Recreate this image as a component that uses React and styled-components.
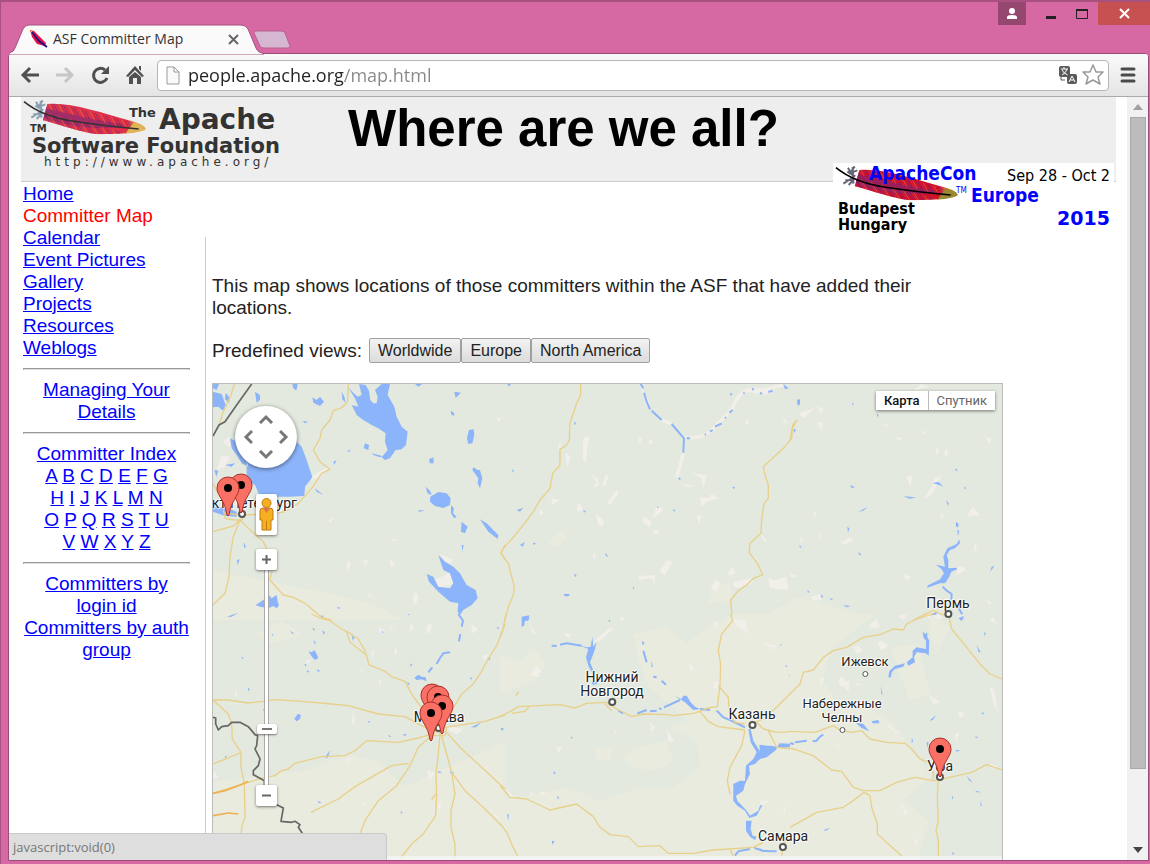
import styled, { createGlobalStyle, css } from "styled-components";
import { useState } from "react";

const GlobalStyle = createGlobalStyle`
    * {
        box-sizing: border-box;
    }

    body {
        margin: 0;
        background: #d668a3;
        font-family: "Liberation Sans", Arial, sans-serif;
        font-size: 19px;
        line-height: 22px;
        color: #222;
    }

    button {
        font: inherit;
        color: inherit;
        cursor: pointer;
    }
`;

const UI_FONT = `"Open Sans", "Noto Sans", sans-serif`;

/* ---------- browser window ---------- */

const Window = styled.div`
    display: flex;
    flex-direction: column;
    height: 100vh;
    overflow: hidden;
    background: #d668a3;
    border-top: 2px solid #a8507f;
    border-left: 1px solid #a8507f;
`;

const TitleBar = styled.header`
    display: flex;
    align-items: flex-start;
    justify-content: space-between;
    height: 51px;
    padding-left: 8px;
    flex-shrink: 0;
    font-family: ${UI_FONT};
`;

const TabStrip = styled.div`
    display: flex;
    padding-top: 22px;
`;

const Tab = styled.div`
    position: relative;
    display: flex;
    align-items: center;
    gap: 4px;
    width: 252px;
    height: 30px;
    padding: 0 22px 0 20px;
    font-size: 14px;
    color: #333;
`;

const TabShape = styled.svg`
    position: absolute;
    left: 0;
    top: 0;
`;

const TabTitle = styled.span`
    position: relative;
    flex: 1;
    white-space: nowrap;
`;

const PlainButton = styled.button`
    position: relative;
    display: flex;
    align-items: center;
    justify-content: center;
    padding: 0;
    border: none;
    background: none;
`;

const Favicon = styled.svg`
    position: relative;
`;

const NewTabButton = styled(PlainButton)`
    height: 30px;
    margin-left: -8px;
`;

const WindowButtons = styled.div`
    display: flex;
`;

const WindowButton = styled(PlainButton)`
    width: ${(p) => p.$width}px;
    height: 23px;
    background: ${(p) => p.$bg || "none"};
    margin-right: ${(p) => p.$gap || 0}px;
`;

const Frame = styled.div`
    display: flex;
    flex-direction: column;
    flex: 1;
    min-height: 0;
    margin: 0 1px 3px 7px;
    border: 1px solid #9b4d78;
    border-radius: 4px 4px 0 0;
    background: #fff;
    overflow: hidden;
`;

const Toolbar = styled.nav`
    display: flex;
    align-items: center;
    flex-shrink: 0;
    height: 43px;
    padding: 0 2px 0 3px;
    background: linear-gradient(#fafafa, #e4e4e4);
    border-bottom: 1px solid #aaa;
`;

const ToolButton = styled(PlainButton)`
    width: ${(p) => p.$width || 35}px;
    height: 32px;
`;

const AddressBar = styled.div`
    display: flex;
    align-items: center;
    flex: 1;
    height: 31px;
    margin-left: 5px;
    padding: 0 2px 0 8px;
    gap: 2px;
    background: #fff;
    border: 1px solid #b5b5b5;
    border-radius: 4px;
`;

const AddressInput = styled.input`
    flex: 1;
    min-width: 0;
    height: 27px;
    padding: 0 0 0 6px;
    border: none;
    outline: none;
    font-family: ${UI_FONT};
    font-size: 18px;
    color: #222;
    background: linear-gradient(to right, #222 162px, #888 162px);
    -webkit-background-clip: text;
    -webkit-text-fill-color: transparent;
`;

const Viewport = styled.div`
    position: relative;
    display: flex;
    flex: 1;
    min-height: 0;
`;

const ScrollTrack = styled.div`
    display: flex;
    flex-direction: column;
    align-items: center;
    width: 21px;
    flex-shrink: 0;
    background: #f1f1f1;
`;

const ScrollArrow = styled(PlainButton)`
    width: 21px;
    height: 20px;
`;

const ScrollThumb = styled.div`
    width: 16px;
    flex: 652;
    background: #bcbcbc;
    border: 1px solid #a9a9a9;
`;

const ScrollRest = styled.div`
    flex: 71;
`;

const StatusBubble = styled.div`
    position: absolute;
    left: 0;
    bottom: 0;
    width: 378px;
    height: 27px;
    padding: 2px 4px;
    background: #dedede;
    border: 1px solid #cacaca;
    border-width: 1px 1px 0 0;
    border-radius: 0 4px 0 0;
    font-family: ${UI_FONT};
    font-size: 13px;
    color: #777;
`;

/* ---------- page ---------- */

const Page = styled.div`
    flex: 1;
    min-width: 0;
    overflow: hidden;
    padding: 0 11px 0 12px;
`;

const PageHeader = styled.div`
    position: relative;
    display: flex;
    align-items: flex-start;
    gap: 57px;
    height: 85px;
    background: #eee;
    border-bottom: 1px solid #ccc;
`;

const PageTitle = styled.h1`
    margin: 3px 0 0;
    font-size: 51px;
    line-height: 58px;
    color: #000;
    white-space: nowrap;
`;

const Banner = styled.a`
    position: absolute;
    right: 2px;
    top: 66px;
    display: block;
    height: 75px;
    background: #fff;
`;

const Columns = styled.div`
    display: grid;
    grid-template-columns: 184px 1fr;
`;

const Sidebar = styled.aside`
    padding: 1px 15px 0 2px;
`;

const Menu = styled.ul`
    margin: 0;
    padding: 0;
    list-style: none;
`;

const link = css`
    color: #0000ff;
    text-decoration: underline;
`;

const Link = styled.a`
    ${link}
`;

const Current = styled.span`
    color: #ff0000;
`;

const Divider = styled.hr`
    margin: 9px 0;
    border: 1px solid #999;
    border-bottom-color: #ddd;
`;

const SideBlock = styled.div`
    text-align: center;
`;

const Main = styled.main`
    margin-top: 55px;
    padding: 38px 0 0 6px;
    border-left: 1px solid #ccc;
    min-height: 700px;
`;

const Intro = styled.p`
    max-width: 740px;
    margin: 0 0 19px;
`;

const Views = styled.div`
    display: flex;
    align-items: center;
    margin-bottom: 20px;
`;

const ViewsLabel = styled.span`
    margin-right: 7px;
`;

const ViewButton = styled.button`
    height: 25px;
    padding: 0 8px;
    border: 1px solid #a0a0a0;
    border-radius: 2px;
    background: linear-gradient(#f2f2f2, #dcdcdc);
    font-size: 16px;
    line-height: 22px;
`;

/* ---------- map ---------- */

const MapBox = styled.div`
    position: relative;
    max-width: 791px;
    height: 488px;
    border: 1px solid #bbb;
    overflow: hidden;
    background: #e3e9de;
    font-family: Roboto, "Noto Sans", sans-serif;
`;

const MapCanvas = styled.svg`
    display: block;
`;

const Place = styled.div`
    position: absolute;
    left: ${(p) => p.$x}px;
    top: ${(p) => p.$y}px;
    display: flex;
    flex-direction: column;
    align-items: center;
    gap: ${(p) => (p.$small ? 2 : 0)}px;
    transform: translate(-50%, -100%);
    font-size: ${(p) => (p.$small ? 13 : 14)}px;
    line-height: 14px;
    text-align: center;
    white-space: pre;
    color: #222;
    text-shadow: 0 0 2px #fff, 0 0 2px #fff, 1px 1px 1px #fff, -1px -1px 1px #fff;
`;

const PlaceDot = styled.span`
    width: ${(p) => (p.$small ? 6 : 8)}px;
    height: ${(p) => (p.$small ? 6 : 8)}px;
    border: ${(p) => (p.$small ? 1 : 2)}px solid #555;
    border-radius: 50%;
    background: #fff;
`;

const Pin = styled.svg`
    position: absolute;
    left: ${(p) => p.$x}px;
    top: ${(p) => p.$y}px;
    transform: translate(-50%, -100%);
`;

const Controls = styled.div`
    position: absolute;
    left: 22px;
    top: 22px;
    display: flex;
    flex-direction: column;
    align-items: center;
`;

const PanPad = styled.div`
    display: grid;
    grid-template-columns: repeat(3, 18px);
    grid-template-rows: repeat(3, 18px);
    grid-template-areas: ". up ." "left . right" ". down .";
    place-content: center;
    width: 62px;
    height: 62px;
    margin-bottom: 26px;
    border-radius: 50%;
    background: #fff;
    box-shadow: 0 1px 4px rgba(0, 0, 0, 0.5);
`;

const PanButton = styled(PlainButton)`
    grid-area: ${(p) => p.$area};

    svg {
        transform: rotate(${(p) => p.$turn}deg);
    }
`;

const ControlButton = styled(PlainButton)`
    width: 21px;
    height: ${(p) => p.$height || 21}px;
    margin-bottom: ${(p) => p.$gap || 0}px;
    background: #fff;
    border-radius: 2px;
    box-shadow: 0 1px 3px rgba(0, 0, 0, 0.5);
`;

const ZoomSlider = styled.input`
    appearance: none;
    writing-mode: vertical-lr;
    direction: rtl;
    width: 21px;
    height: 215px;
    margin: 0;
    background: none;

    &::-webkit-slider-runnable-track {
        appearance: none;
        width: 5px;
        height: 215px;
        margin: 0 auto;
        background: #fff;
        border: 1px solid #aaa;
        border-width: 0 1px;
    }

    &::-webkit-slider-thumb {
        appearance: none;
        width: 20px;
        height: 10px;
        margin-left: -8px;
        border-radius: 2px;
        background: linear-gradient(#777, #777) center / 10px 2px no-repeat #fff;
        box-shadow: 0 1px 2px rgba(0, 0, 0, 0.5);
    }
`;

const MapTypes = styled.div`
    position: absolute;
    top: 7px;
    right: 7px;
    display: flex;
    background: #fff;
    box-shadow: 0 1px 3px rgba(0, 0, 0, 0.5);
`;

const MapType = styled.button`
    height: 19px;
    padding: 0 8px;
    border: none;
    border-left: ${(p) => (p.$first ? "none" : "1px solid #bbb")};
    background: #fff;
    font-size: 13px;
    line-height: 18px;
    font-weight: ${(p) => (p.$active ? 500 : 400)};
    color: ${(p) => (p.$active ? "#111" : "#666")};
`;

const MapCredits = styled.div`
    position: absolute;
    left: 0;
    right: 0;
    bottom: 0;
    height: 14px;
    background: rgba(245, 245, 245, 0.8);
`;

/* ---------- data ---------- */

const menu = [
    "Home",
    "Committer Map",
    "Calendar",
    "Event Pictures",
    "Gallery",
    "Projects",
    "Resources",
    "Weblogs",
];

const letterRows = ["ABCDEFG", "HIJKLMN", "OPQRSTU", "VWXYZ"];

const places = [
    { name: "Санкт-Петербург", x: 29, y: 134 },
    { name: "Москва", x: 226, y: 348 },
    { name: "Нижний\nНовгород", x: 399, y: 322 },
    { name: "Казань", x: 539, y: 345 },
    { name: "Набережные\nЧелны", x: 629, y: 349, small: true },
    { name: "Ижевск", x: 652, y: 293, small: true },
    { name: "Пермь", x: 735, y: 234 },
    { name: "Самара", x: 570, y: 467 },
    { name: "Уфа", x: 727, y: 397 },
];

const pins = [
    [28, 130],
    [15, 133],
    [219, 340],
    [225, 342],
    [229, 351],
    [218, 358],
    [727, 394],
];

// Map tiles, drawn at three units to the pixel
const tiles = [
    {
        x: -8,
        y: -14,
        land: "M24 750 V600 C200 640 300 650 500 700 L600 750Z",
        sand: "M300 305 322 318 350 300 372 290 345 322 312 330ZM480 185 500 172 502 178ZM50 255 75 262 60 290 35 300ZM430 570 438 582 430 605 424 590ZM556 565 570 585 555 590ZM630 660 640 680 632 705 624 690ZM475 570 490 572 482 590ZM370 450 388 440 375 460ZM875 148 892 140 882 156ZM705 550 745 570 735 580 720 572ZM700 655 690 630 740 605 748 640ZM52 215 75 200 80 235ZM560 505 575 508 565 515ZM480 660 502 680 495 682Z",
        water: "M428 50 445 68 458 80 470 75 462 42 482 45 492 62 496 90 505 100 515 100 518 80 510 60 530 42 555 42 548 75 568 110 575 140 590 170 608 185 603 225 590 238 572 240 555 265 540 270 530 262 540 250 548 240 540 215 542 190 520 175 500 165 475 150 455 135 440 105 460 110 450 85ZM75 205 95 215 120 250 130 290 110 280 95 255 80 235ZM125 270 125 330 150 345 165 380 250 380 298 378 300 350 322 322 315 300 305 270 290 230 270 210 200 200ZM24 65 50 72 62 105 54 122 40 110 24 112ZM24 42 42 42 35 60 24 55ZM62 68 75 85 72 98 60 88ZM150 65 165 75 165 90 155 98ZM262 42 278 42 274 62 265 55ZM322 82 335 90 345 80 357 95 345 108 325 98ZM410 65 418 80 422 98 412 88ZM480 220 492 225 490 240 476 235ZM748 65 768 68 752 84ZM738 122 748 130 746 138 738 132ZM792 180 806 178 808 195 802 220 790 222 786 205ZM805 292 818 300 825 300 832 325 825 355 818 340 820 325 802 300ZM676 380 700 366 725 370 737 385 735 405 715 414 690 408 675 395ZM662 350 675 362 680 375 668 370ZM738 405 747 415 744 430 755 440 748 445 738 430ZM770 455 788 470 780 490 768 485ZM825 448 845 460 880 495 878 507 850 485ZM700 555 720 575 745 590 765 610 785 645 812 660 818 685 800 705 775 720 765 735 758 725 760 700 735 695 700 665 672 635 665 612 685 620 700 650 735 655 745 640 735 610 715 600ZM152 705 175 690 190 672 200 685 215 675 218 695 222 705 215 715 205 708 190 715 165 710ZM24 410 70 415 95 425 95 440 60 438 24 425ZM65 740 100 728 80 740ZM640 420 660 422 642 425ZM330 355 355 375 335 365ZM672 268 685 262 686 280 675 280ZM115 515 123 530 118 535ZM96 570 104 568 98 585ZM292 153 310 155 300 160ZM385 275 395 270 388 284ZM428 240 438 242 430 246ZM500 250 532 258 525 262 505 255ZM770 525 776 525 772 545ZM395 712 405 712 402 718ZM28 300 40 302 34 320ZM60 285 90 280 80 290ZM630 42 652 42 640 50Z",
        rivers: "",
        roads: "M88 42 78 75 55 125 40 170M430 42 428 95 412 112 385 122 375 150 350 180 345 205 325 240 345 275 375 298 350 310 320 355 280 400 240 425 205 432 110 435 60 430M24 485 85 468 105 450 130 475 175 515 205 580 195 630 235 675 265 682 300 700 350 742 380 750M105 450 85 500 75 560 72 620 60 670 24 705M24 340 40 370M900 525 888 548 900 568M55 420 60 445 85 450 110 450 122 435 108 420",
        borders: "M24 198 42 165 60 155 95 105 140 42",
    },
    {
        x: 287,
        y: -14,
        land: "M900 690 L820 720 800 750 H900ZM640 650 690 640 700 690 620 700ZM145 510 190 480 200 500 180 525 150 530Z",
        sand: "M250 205 268 198 262 235 258 275 248 270ZM270 308 292 325 298 345 280 355 290 335ZM318 312 325 320 315 350 308 345ZM350 360 356 370 330 405 322 398ZM235 395 250 420 230 425ZM288 432 312 450 308 470 295 465ZM430 440 455 455 450 470 430 460ZM455 480 480 482 468 496ZM600 380 625 385 635 372 655 385 620 395 605 412ZM590 435 605 440 596 460ZM500 570 518 575 495 615 478 605ZM415 618 465 615 465 640 455 625 418 630ZM648 630 662 640 650 665 632 655ZM695 590 708 608 690 618 684 608ZM700 635 755 625 760 635 720 655 700 650ZM805 625 825 630 860 620 865 660 810 655ZM575 95 592 90 580 96ZM740 145 748 162 735 160ZM415 200 428 205 418 222ZM448 205 462 220 445 222ZM180 210 185 240 175 235ZM155 385 180 390 155 405ZM195 245 212 260 202 290ZM850 140 862 160 852 158ZM420 45 450 100 440 110ZM278 550 288 555 284 580ZM575 310 620 315 610 355 605 325ZM540 340 592 348 560 350ZM470 405 490 420 460 445ZM118 415 130 428 120 438ZM705 95 740 60 820 55 800 75 740 65ZM780 490 802 512 790 512ZM830 685 840 700 832 695Z",
        water: "M22 42 32 42 28 50ZM60 525 75 515 68 530ZM50 420 70 413 60 425ZM98 518 108 520 102 525ZM190 672 210 672 205 679 195 679ZM222 612 230 615 226 622ZM315 547 325 560 318 558ZM65 740 88 736 86 750 68 750ZM398 650 404 654 400 658ZM697 350 706 352 700 357ZM892 90 900 88 900 105 893 102ZM36 298 42 302 38 308ZM690 68 698 72 692 78ZM470 408 476 410 474 416ZM518 418 526 420 522 426ZM250 420 258 424 252 428ZM222 155 229 160 224 166ZM850 42 866 55 855 58ZM534 322 544 326 538 330ZM880 178 888 178 883 190Z",
        rivers: "M422 42 430 55M432 68 440 95 450 118M455 122 485 150M515 162 552 205 550 248M560 205 570 205M614 194 618 193M630 185 638 180M645 170 665 160M675 145 678 142M688 128 698 120M730 70 734 68M756 58 762 58M780 68 786 72M805 66 818 62",
        pale: "M485 150 515 162M550 205 600 200 630 185 690 125 715 80 740 60 790 60 850 45M550 250 545 270 530 320",
        roads: "M242 42 242 75 230 100 220 130 210 160 208 210 200 225 180 238 180 285 158 310 150 355 120 390 100 425 70 465 35 508 10 535 2 550 25 580 35 620 43 650 40 675 25 710 15 750M892 150 878 165 875 205 850 235 790 290 795 315 805 345 805 385 792 402 785 450 783 490 750 520 748 548 775 585 788 615 760 625 740 645 715 662 692 690 695 725 698 750",
        borders: "",
    },
    {
        x: 577,
        y: -14,
        land: "M0 680 L100 700 220 740 240 750 H0Z",
        sand: "M25 128 75 115 40 145ZM80 108 102 118 92 130ZM80 160 100 155 95 180ZM348 320 368 315 362 350ZM435 325 455 318 425 375 400 385 425 350ZM435 230 448 240 440 255ZM470 235 476 265 462 250ZM318 200 340 205 325 212ZM150 520 180 500 190 515 165 522ZM555 515 562 530 550 550ZM548 410 570 435 530 440ZM450 430 462 435 455 450ZM590 690 605 698 595 704ZM338 612 365 622 350 630ZM0 610 22 618 5 622ZM60 680 95 672 95 690 70 692ZM395 185 410 183 400 195ZM280 160 298 168 285 170ZM585 200 605 205 598 222ZM500 590 520 590 528 600 500 615ZM30 505 42 510 32 520ZM68 428 82 426 74 440ZM370 60 395 42 420 52ZM90 480 95 500 88 510ZM410 735 430 720 460 745 420 750Z",
        water: "M22 88 28 90 26 108 23 105ZM185 98 192 102 188 106ZM260 130 266 135 262 142ZM205 425 235 410 220 422ZM340 379 378 382 360 386ZM180 345 195 352 185 354ZM172 470 178 475 174 488ZM428 340 445 335 460 350 448 345ZM468 390 476 400 474 408ZM498 455 506 462 504 472 498 470ZM502 480 508 482 504 498ZM508 508 510 520 495 535 480 540 470 555 475 570 475 595 500 593 502 598 484 605 478 620 465 640 450 640 412 653 412 647 450 628 462 610 455 598 438 584 465 590 460 560 472 535 500 522ZM605 590 614 588 600 605ZM160 706 182 708 170 712ZM28 525 34 530 30 534ZM52 660 58 665 54 670ZM92 672 100 680 94 684ZM205 545 215 555 208 555ZM495 295 503 300 498 304ZM522 350 529 354 524 358ZM120 684 130 688 122 690Z",
        rivers: "M458 650 470 662 485 672 484 690M500 705 515 730 522 745M420 735 440 730",
        roads: "M20 150 5 180 0 212M370 750 400 735 430 722 460 735 475 735",
        borders: "",
    },
    {
        x: -8,
        y: 230,
        land: "M24 500 150 490 300 470 430 420 520 440 600 520 700 470 820 420 900 380V750H24ZM150 60 230 20 290 60 200 90Z",
        sand: "M720 335 775 345 755 362 735 350ZM665 470 690 475 675 500ZM520 35 540 50 525 58ZM670 25 682 35 675 60 662 50ZM455 155 475 175 470 175ZM90 228 98 238 92 255ZM445 290 450 325 440 330ZM865 595 885 610 875 615ZM555 30 565 50 558 52ZM570 95 578 115 568 125ZM520 190 530 205 522 215ZM620 25 625 45 612 50ZM24 470 42 490 24 495ZM800 30 820 45 800 60ZM500 110 508 112 500 135ZM830 125 850 120 838 140ZM700 565 710 570 702 590ZM470 565 490 568 475 575ZM300 140 320 135 310 150ZM430 430 440 435 430 450Z",
        water: "M268 315 278 300 288 302 285 315 275 322ZM628 192 640 182 650 188 662 190 665 202 650 196 635 198ZM310 112 320 115 328 108 335 120 340 132 330 138 322 130ZM325 78 332 84 330 92ZM298 150 305 152 302 158ZM335 165 345 170 340 175ZM305 170 313 170 308 176ZM352 50 360 54 356 62ZM322 42 330 45 326 50ZM440 65 448 70 444 80ZM615 148 622 152 618 158ZM606 205 614 208 610 214ZM795 190 802 192 798 198ZM850 130 856 134 852 140ZM128 220 134 226 130 232ZM185 265 190 268 186 274ZM174 284 180 288 176 292ZM488 321 497 323 492 327ZM550 362 560 368 552 368ZM592 362 606 360 600 366ZM360 430 376 408 368 432ZM338 560 350 566 342 568ZM586 592 593 595 590 600ZM798 340 830 325 812 340ZM888 342 896 345 890 349ZM350 2 356 8 350 10ZM200 58 205 62 202 66ZM255 50 270 60 260 58ZM875 38 883 42 878 46ZM110 128 116 132 112 136ZM60 425 66 428 60 432ZM530 50 536 55 532 57ZM698 472 712 474 702 478ZM735 470 748 476 738 480ZM608 0 614 0 610 4Z",
        rivers: "M760 0 774 20 770 38M766 60 762 82M695 150 705 132 715 118 735 115M670 175 682 160",
        roads: "M320 0 345 12 375 20 405 42 430 55 460 75 480 110 492 152 540 172 560 188 600 202 620 240 645 275 690 330 705 360M425 55 435 85 480 120M900 30 893 50 875 95 850 135 825 180 805 210 770 240 740 290 710 350M24 258 70 258 130 267 175 262 210 257 290 262 380 270 430 275 520 300 600 308 650 335 700 355M900 303 840 322 720 340M24 538 100 515 170 492 210 485 230 470 250 465 270 448 350 428 420 425 450 410 485 380 580 385 640 372 690 358M24 450 70 432 108 415M24 258 70 300 80 330 82 375 108 415 108 460 118 510 120 610 112 630 108 660M318 595 400 555 450 518 560 455 612 448M680 365 640 400 615 455 575 515 520 560 480 620 465 660M705 360 700 420 693 480 695 540 692 605 655 660 620 690 585 735M692 540 680 558M708 360 725 420 740 475 750 540 738 590 738 640 750 690 750 735M740 475 780 530 840 585 880 625 900 648M720 350 770 405 830 460 900 525M670 345 680 365 720 365 725 340",
        major: "M24 538 60 530 100 515 130 502M24 605 70 597 100 600",
        borders: "M24 310 32 312 32 330 40 348 50 338 70 335 80 325 105 325 130 338 150 362 158 365 155 395 150 405 165 435 160 455 145 470 145 482 178 500 178 515M200 570 215 572 235 582 228 622 260 625 270 622 285 632 280 640 292 658",
    },
    {
        x: 287,
        y: 230,
        land: "M0 120 60 140 100 100 140 150 100 200 0 240ZM400 60 500 40 560 90 620 40 700 0H900V750H0V560L100 540 200 520 300 560 420 520 520 520 600 460 590 380 500 340 560 320 440 210 420 150ZM370 430 400 400 500 380 520 440 470 470 390 460ZM280 400 340 400 330 440 290 440Z",
        sand: "M108 155 125 170 115 180 120 190 92 185ZM360 10 375 12 365 25ZM280 85 330 40 340 45 300 80ZM565 145 582 160 575 180ZM640 25 655 20 650 45ZM645 205 655 202 652 225 640 220ZM700 15 735 20 748 60 710 35ZM790 88 830 95 820 108ZM500 345 525 385 505 380ZM450 325 465 340 455 355ZM170 400 188 398 175 420ZM780 560 812 560 785 575ZM20 525 42 550 28 550ZM850 575 858 580 852 605ZM95 530 100 540 88 550ZM120 532 140 535 125 545ZM190 55 215 60 205 75ZM345 350 350 355 340 365ZM90 30 108 60 100 60Z",
        water: "M240 95 260 100 272 98 277 68 280 98 290 85 285 105 278 125 270 145 280 168 278 180 265 155 258 130 265 105ZM65 10 82 8 85 20 75 20 72 35 65 38ZM275 205 290 202 292 210 278 212ZM745 345 752 345 760 380 780 412 778 392 800 395 815 395 832 400 828 408 800 430 780 435 765 450 747 455 750 480 735 510 730 530 708 545 712 560 740 590 750 605 775 590 780 575 788 572 770 605 748 612 735 590 712 575 700 560 700 510 720 500 735 500 738 455 760 435 770 415 752 385ZM832 400 838 388 885 390 900 380 900 387 885 398 840 402ZM738 620 755 620 752 645 758 665 770 668 765 678 750 668 738 650ZM525 247 545 255 550 245 560 245 572 265 585 278 600 285 580 288 555 265ZM156 680 164 682 156 692ZM22 600 27 602 24 622ZM425 80 434 88 428 94ZM453 142 460 158 455 158ZM2 342 12 344 6 350ZM160 472 167 476 162 482ZM855 152 863 158 858 160ZM868 180 876 188 872 196ZM325 17 332 20 328 25ZM170 545 178 552 174 556ZM212 368 218 370 215 376ZM760 698 785 705 790 714 765 706ZM840 90 845 92 842 95",
        rivers: "M155 95 170 96M180 92 200 88 245 95M355 290 370 298M412 298 440 288M450 292 470 290M478 282 484 286M492 280 540 258M600 285 630 288M650 290 670 310 690 318 735 340M705 725 715 712 750 705M785 710 815 712 830 712M430 110 440 145M460 188 470 190M485 200 498 212",
        roads: "M18 0 10 40 0 70M0 308 35 290 55 278 180 272 225 282 260 268 320 265 350 285 380 300 395 308 430 300 500 302 520 305 580 298 600 292 625 282 652 278 660 215 662 150 655 110 665 60 698 20 692 0M35 298 75 292 90 275M655 215 685 250 688 300 705 325 735 330M900 212 870 240 830 280 790 315 765 325M600 292 625 322 655 338 735 348M735 350 725 395 690 460 682 500 690 540M770 325 790 345 830 355 900 352M805 350 830 400 900 408M0 515 30 550 80 555 150 588 230 570 280 608 300 640 330 662 385 668 415 698 480 695 505 718 580 718 640 708 760 700 790 685M0 628 20 655 35 690 52 725M900 632 880 650 850 690 845 725M690 702 700 728M48 245 56 232M315 270 335 290",
        borders: "",
    },
    {
        x: 577,
        y: 230,
        land: "M0 0H260L180 60 120 110 100 200 140 260 200 260 300 320 380 420 420 490 340 560 420 620 380 740H0ZM300 100 390 90 400 160 420 240 360 260ZM420 0 480 40 440 120 420 60Z",
        sand: "M240 30 260 15 270 40 240 42ZM262 85 275 80 295 95 275 110ZM190 100 205 95 220 110 200 120ZM85 195 105 190 95 210ZM155 185 165 200 155 220 145 205ZM415 240 450 265 430 270ZM505 295 520 292 520 308 508 310ZM335 570 355 595 345 605ZM370 680 385 672 378 695ZM600 20 610 10 620 30ZM600 220 612 225 625 300 610 265ZM495 360 508 355 498 385ZM130 385 160 405 145 400ZM195 205 215 212 200 215ZM290 330 345 365 300 345ZM150 205 180 200 175 235ZM500 10 520 0 525 12ZM600 450 625 458 605 465ZM325 5 350 2 340 20Z",
        water: "M398 52 405 60 412 55 412 70 418 80 416 125 408 118 380 115 372 130 375 145 355 155 350 145 368 130 368 110 380 100 408 105 408 80 400 70ZM345 148 340 158 315 165 305 175 303 190 295 190 298 172 315 155ZM195 325 220 330 238 352 215 342ZM245 322 265 318 268 328 248 328ZM418 320 440 302 428 318ZM575 295 583 297 578 302ZM365 372 370 380 365 388ZM485 545 490 548 488 558ZM100 648 120 642 108 650ZM555 368 565 368 558 373ZM498 408 510 408 500 414ZM530 485 548 505 538 500ZM555 530 575 535 560 535ZM582 55 588 58 584 66ZM560 92 572 115 566 115ZM505 12 522 5 515 22ZM410 385 416 385 412 402ZM272 215 278 242 274 240ZM486 715 494 718 488 722ZM570 560 576 575 572 575Z",
        rivers: "M0 388 12 390M15 385 50 380M68 382 80 380 90 368 100 362",
        roads: "M0 240 30 210 40 175 70 168 100 130 130 110 170 100 220 70 270 62 310 45 340 48 350 30 380 15 410 5 430 0M475 0 485 45 530 100 570 150 600 180 636 195M0 352 75 355 130 335 150 348 185 355 215 350 240 375 290 385 345 388 365 405 390 435 415 445 430 480M0 402 70 425 125 468 155 472 190 520 220 530 270 530 320 505 375 490 430 500 480 490 545 475 590 452 636 468M0 640 80 595 160 580 190 560 222 535 240 545 245 580 262 630 262 660 295 690 335 725M445 500 442 550 445 620 438 650 445 680 445 725M430 470 430 495",
        borders: "",
    },
];

/* ---------- drawings ---------- */

function Feather({ bright }) {
    const barbs = Array.from({ length: 34 }, (_, i) => 140 + i * 8);
    const id = bright ? "feather-bright" : "feather-soft";
    return (
        <g>
            <defs>
                <linearGradient id={id}>
                    <stop offset="0" stopColor={bright ? "#c81030" : "#d83850"} />
                    <stop offset="0.8" stopColor={bright ? "#d01028" : "#e03048"} />
                    <stop offset="0.9" stopColor="#d8a050" />
                    <stop offset="1" stopColor={bright ? "#908030" : "#e0c060"} />
                </linearGradient>
                <clipPath id={`${id}-clip`}>
                    <path d="M76 15C140 8 230 38 336 68 361 76 371 84 371 91 356 102 276 106 226 106 176 100 96 72 62 64Z" />
                </clipPath>
            </defs>
            <path
                d="M62 4 50 22M70 16 44 26M42 8 54 30M28 56 60 36M34 46 60 44M44 60 62 40M56 6 58 56M40 20 64 34"
                stroke={bright ? "#667" : "#8aa0b0"}
                strokeWidth="6"
            />
            <g clipPath={`url(#${id}-clip)`}>
                <rect x="50" width="330" height="120" fill={`url(#${id})`} />
                <path
                    d="M66 26C130 42 200 58 300 76L310 84C220 92 140 84 66 56Z"
                    fill="#7a2878"
                    opacity="0.6"
                />
                {barbs.map((x, i) => (
                    <path
                        key={x}
                        d={`M${x - 66} ${28 + i * 2}l-14-26M${x - 76} ${40 + i * 2}l24 38`}
                        stroke={["#5a2890", "#e82838", "#e07040", "#c01848"][i % 4]}
                        strokeWidth="2"
                    />
                ))}
            </g>
            <path d="M336 70C361 76 371 84 371 91 360 98 340 102 310 104L322 88Z" fill={bright ? "#9a8830" : "#e0b458"} />
            <path d="M6 8Q60 52 150 66T350 90" fill="none" stroke={bright ? "#000" : "#333"} strokeWidth="5" />
        </g>
    );
}

function AsfLogo() {
    return (
        <svg width="270" height="74" viewBox="0 0 270 74" role="img" aria-label="The Apache Software Foundation">
            <g transform="translate(1 2) scale(.3333)">
                <Feather />
            </g>
            <g fill="#333" fontFamily="'DejaVu Sans', Verdana, sans-serif" fontWeight="bold">
                <text x="108" y="20" fontSize="13">The</text>
                <text x="138" y="32" fontSize="28">Apache</text>
                <text x="9" y="35" fontSize="10">TM</text>
                <text x="11" y="56" fontSize="21">Software Foundation</text>
                <text x="23" y="69" fontSize="12" fontWeight="normal" letterSpacing="4">
                    http://www.apache.org/
                </text>
            </g>
        </svg>
    );
}

function ApacheConLogo() {
    return (
        <svg width="281" height="75" viewBox="0 0 281 75" role="img" aria-label="ApacheCon Europe 2015">
            <g transform="translate(1 2) scale(.3333)">
                <Feather bright />
            </g>
            <g
                fill="#0000ff"
                fontFamily="'DejaVu Sans Condensed', 'DejaVu Sans', Tahoma, sans-serif"
                fontWeight="bold"
            >
                <text x="36" y="17" fontSize="19">ApacheCon</text>
                <text x="123" y="30" fontSize="8" fontWeight="normal">TM</text>
                <text x="138" y="39" fontSize="19">Europe</text>
                <text x="277" y="62" fontSize="19" fontFamily="'DejaVu Sans', sans-serif" textAnchor="end">
                    2015
                </text>
            </g>
            <g
                fill="#000"
                fontFamily="'DejaVu Sans Condensed', 'DejaVu Sans', Tahoma, sans-serif"
                fontSize="16"
            >
                <text x="277" y="18" textAnchor="end">Sep 28 - Oct 2</text>
                <text x="5" y="51" fontWeight="bold">Budapest</text>
                <text x="5" y="67" fontWeight="bold">Hungary</text>
            </g>
        </svg>
    );
}

function Tile({ tile }) {
    return (
        <g transform={`translate(${tile.x} ${tile.y}) scale(.3333)`} fill="none" strokeLinejoin="round">
            <path d={tile.land} fill="#e8ebde" />
            <path d={tile.sand} fill="#f2efeb" />
            <path d={tile.pale} stroke="#f2efeb" strokeWidth="10" />
            <path d={tile.water} fill="#8cb4fa" />
            <path d={tile.rivers} stroke="#8cb4fa" strokeWidth="6" />
            <path d={tile.roads} stroke="#e8d08a" strokeWidth="4" />
            <path d={tile.major} stroke="#f0b050" strokeWidth="5" />
            <path d={tile.borders} stroke="#666" strokeWidth="5" />
        </g>
    );
}

function Marker({ x, y }) {
    return (
        <Pin $x={x} $y={y} width="24" height="41" viewBox="0 0 24 41">
            <path
                d="M12 1a11 11 0 0 0-11 11c0 8 8 12 10 27q1 2 2 0c2-15 10-19 10-27a11 11 0 0 0-11-11Z"
                fill="#fb7064"
                stroke="#a8322a"
            />
            <circle cx="12" cy="12" r="4" />
        </Pin>
    );
}

function TitleArea() {
    return (
        <TitleBar>
            <TabStrip>
                <Tab>
                    <TabShape width="256" height="31" viewBox="0 0 256 31">
                        <path
                            d="M0 31V29Q5 28 6 24L14 5Q16 1 20 1H232Q237 1 239 5L247 24Q249 29 254 29V31Z"
                            fill="#fafafa"
                            stroke="#a8507f"
                            strokeWidth="1"
                        />
                    </TabShape>
                    <Favicon width="20" height="20" viewBox="0 0 20 20">
                        <path d="M1 1 5 2 17 14 16 17 8 15 3 8Z" fill="#e8104a" />
                        <path d="M1 0 5 4 3 5Z" fill="#f5c400" />
                        <path d="M3 3 10 12 18 18" stroke="#20107a" strokeWidth="2" fill="none" />
                    </Favicon>
                    <TabTitle>ASF Committer Map</TabTitle>
                    <PlainButton aria-label="Close tab">
                        <svg width="11" height="11" viewBox="0 0 11 11">
                            <path d="M1 1 10 10M10 1 1 10" stroke="#666" strokeWidth="2" />
                        </svg>
                    </PlainButton>
                </Tab>
                <NewTabButton aria-label="New tab">
                    <svg width="38" height="19" viewBox="0 0 38 19">
                        <path
                            d="M3 1H28Q31 1 32 3L37 16Q37 18 35 18H11Q8 18 7 16L1 3Q1 1 3 1Z"
                            fill="#d5b7d2"
                            stroke="#b9628f"
                        />
                    </svg>
                </NewTabButton>
            </TabStrip>
            <WindowButtons>
                <WindowButton aria-label="Profile" $width={28} $bg="#95476f" $gap={10}>
                    <svg width="12" height="12" viewBox="0 0 12 12" fill="#fff">
                        <circle cx="6" cy="3" r="3" />
                        <path d="M1 11V9Q1 7 6 7T11 9V11Z" />
                    </svg>
                </WindowButton>
                <WindowButton aria-label="Minimize" $width={30}>
                    <svg width="12" height="12" viewBox="0 0 12 12">
                        <path d="M1 8H11V11H1Z" fill="#222" />
                    </svg>
                </WindowButton>
                <WindowButton aria-label="Maximize" $width={32}>
                    <svg width="14" height="12" viewBox="0 0 14 12">
                        <path d="M1.500 1.500H12.500V10.500H1.500Z" fill="none" stroke="#222" />
                        <path d="M1 2H13" stroke="#222" strokeWidth="2" />
                    </svg>
                </WindowButton>
                <WindowButton aria-label="Close" $width={52} $bg="#c75050">
                    <svg width="11" height="11" viewBox="0 0 11 11">
                        <path d="M1 1 10 10M10 1 1 10" stroke="#fff" strokeWidth="2" />
                    </svg>
                </WindowButton>
            </WindowButtons>
        </TitleBar>
    );
}

function ToolbarArea() {
    const [url, setUrl] = useState("people.apache.org/map.html");

    return (
        <Toolbar>
            <ToolButton aria-label="Back">
                <svg width="20" height="18" viewBox="0 0 20 18" fill="none" stroke="#505050" strokeWidth="3">
                    <path d="M10 2 3 9 10 16M3 9H19" />
                </svg>
            </ToolButton>
            <ToolButton aria-label="Forward">
                <svg width="20" height="18" viewBox="0 0 20 18" fill="none" stroke="#c6c6c6" strokeWidth="3">
                    <path d="M10 2 17 9 10 16M17 9H1" />
                </svg>
            </ToolButton>
            <ToolButton aria-label="Reload">
                <svg width="20" height="20" viewBox="0 0 20 20">
                    <path d="M15 5A7 7 0 1 0 17 13" fill="none" stroke="#505050" strokeWidth="3" />
                    <path d="M19 1V9H11Z" fill="#505050" />
                </svg>
            </ToolButton>
            <ToolButton aria-label="Home">
                <svg width="20" height="20" viewBox="0 0 20 20" fill="#505050">
                    <path d="M10 1 19 11 17 12 10 5 3 12 1 11Z" />
                    <path d="M4 12 10 7 16 12V19H12V13H8V19H4Z" />
                    <path d="M14 1H16V6L14 4Z" />
                </svg>
            </ToolButton>
            <AddressBar>
                <svg width="14" height="19" viewBox="0 0 14 19" fill="#fafafa" stroke="#999">
                    <path d="M1 1H8L13 6V18H1ZM8 1V6H13" />
                </svg>
                <AddressInput aria-label="Address" value={url} onChange={(e) => setUrl(e.target.value)} />
                <PlainButton aria-label="Translate">
                    <svg width="20" height="20" viewBox="0 0 20 20">
                        <rect x="1" y="1" width="11" height="11" rx="2" fill="#5a5a5a" />
                        <path d="M3 4H10M6 2V4M4 10Q8 8 9 4M4 5Q6 9 10 10" stroke="#fff" fill="none" />
                        <path d="M3 12V15H7" stroke="#5a5a5a" fill="none" />
                        <rect x="9" y="9" width="10" height="10" rx="2" fill="#5a5a5a" />
                        <path d="M11 17 14 11 17 17M12 15H16" stroke="#fff" fill="none" />
                    </svg>
                </PlainButton>
                <PlainButton aria-label="Bookmark this page">
                    <svg width="26" height="24" viewBox="0 0 26 24">
                        <path
                            d="M13 2 16 9 23 9 18 14 20 21 13 17 6 21 8 14 3 9 10 9Z"
                            fill="#fff"
                            stroke="#999"
                            strokeWidth="1.5"
                            strokeLinejoin="round"
                        />
                    </svg>
                </PlainButton>
            </AddressBar>
            <ToolButton aria-label="Menu" $width={37}>
                <svg width="16" height="16" viewBox="0 0 16 16" stroke="#4a4a4a" strokeWidth="3" strokeLinecap="round">
                    <path d="M2 2H14M2 8H14M2 14H14" />
                </svg>
            </ToolButton>
        </Toolbar>
    );
}

function SideMenu() {
    return (
        <Sidebar>
            <Menu>
                {menu.map((item) => (
                    <li key={item}>
                        {item === "Committer Map" ? <Current>{item}</Current> : <Link href="#">{item}</Link>}
                    </li>
                ))}
            </Menu>
            <Divider />
            <SideBlock>
                <Link href="#">Managing Your Details</Link>
            </SideBlock>
            <Divider />
            <SideBlock>
                <Link href="#">Committer Index</Link>
                {letterRows.map((row) => (
                    <div key={row}>
                        {row.split("").map((letter) => (
                            <span key={letter}>
                                <Link href={`#${letter}`}>{letter}</Link>{" "}
                            </span>
                        ))}
                    </div>
                ))}
            </SideBlock>
            <Divider />
            <SideBlock>
                <Link href="#">Committers by login id</Link>
                <br />
                <Link href="#">Committers by auth group</Link>
            </SideBlock>
        </Sidebar>
    );
}

function CommitterMap() {
    const [zoom, setZoom] = useState(5);
    const [type, setType] = useState("Карта");

    return (
        <MapBox>
            <MapCanvas width="789" height="486" viewBox="0 0 789 486">
                {tiles.map((tile) => (
                    <Tile key={`${tile.x}/${tile.y}`} tile={tile} />
                ))}
            </MapCanvas>
            {places.map((place) => (
                <Place key={place.name} $x={place.x} $y={place.y} $small={place.small}>
                    {place.name}
                    <PlaceDot $small={place.small} />
                </Place>
            ))}
            {pins.map(([x, y]) => (
                <Marker key={`${x}/${y}`} x={x} y={y} />
            ))}
            <MapCredits />
            <Controls>
                <PanPad>
                    {[
                        ["up", 0],
                        ["right", 90],
                        ["down", 180],
                        ["left", 270],
                    ].map(([area, turn]) => (
                        <PanButton key={area} $area={area} $turn={turn} aria-label={`Pan ${area}`}>
                            <svg width="16" height="10" viewBox="0 0 16 10">
                                <path d="M2 9 8 3 14 9" fill="none" stroke="#777" strokeWidth="3" />
                            </svg>
                        </PanButton>
                    ))}
                </PanPad>
                <ControlButton aria-label="Street View" $height={41} $gap={14}>
                    <svg width="17" height="36" viewBox="0 0 17 36" fill="#f5b020" stroke="#c07a10">
                        <path d="M2 14Q2 11 5 11H12Q15 11 15 14V23H13V33H4V23H2Z" />
                        <circle cx="8.5" cy="6" r="4.5" />
                        <path d="M5 11H12L8.5 16Z" fill="#e07050" stroke="none" />
                        <path d="M8.5 24V33" />
                    </svg>
                </ControlButton>
                <ControlButton aria-label="Zoom in" onClick={() => setZoom(Math.min(20, zoom + 1))}>
                    <svg width="11" height="11" viewBox="0 0 11 11" stroke="#666" strokeWidth="2">
                        <path d="M5.500 1V10M1 5.500H10" />
                    </svg>
                </ControlButton>
                <ZoomSlider
                    type="range"
                    aria-label="Zoom"
                    min="0"
                    max="20"
                    value={zoom}
                    onChange={(e) => setZoom(Number(e.target.value))}
                />
                <ControlButton aria-label="Zoom out" onClick={() => setZoom(Math.max(0, zoom - 1))}>
                    <svg width="11" height="11" viewBox="0 0 11 11" stroke="#666" strokeWidth="2">
                        <path d="M1 5.500H10" />
                    </svg>
                </ControlButton>
            </Controls>
            <MapTypes>
                {["Карта", "Спутник"].map((name, i) => (
                    <MapType key={name} $first={i === 0} $active={type === name} onClick={() => setType(name)}>
                        {name}
                    </MapType>
                ))}
            </MapTypes>
        </MapBox>
    );
}

export default function App() {
    return (
        <Window>
            <GlobalStyle />
            <TitleArea />
            <Frame>
                <ToolbarArea />
                <Viewport>
                    <Page>
                        <PageHeader>
                            <AsfLogo />
                            <PageTitle>Where are we all?</PageTitle>
                            <Banner href="#">
                                <ApacheConLogo />
                            </Banner>
                        </PageHeader>
                        <Columns>
                            <SideMenu />
                            <Main>
                                <Intro>
                                    This map shows locations of those committers within the ASF that have added
                                    their locations.
                                </Intro>
                                <Views>
                                    <ViewsLabel>Predefined views:</ViewsLabel>
                                    <ViewButton>Worldwide</ViewButton>
                                    <ViewButton>Europe</ViewButton>
                                    <ViewButton>North America</ViewButton>
                                </Views>
                                <CommitterMap />
                            </Main>
                        </Columns>
                    </Page>
                    <ScrollTrack>
                        <ScrollArrow aria-label="Scroll up">
                            <svg width="10" height="6" viewBox="0 0 10 6" fill="#a0a0a0">
                                <path d="M5 0 10 6H0Z" />
                            </svg>
                        </ScrollArrow>
                        <ScrollThumb />
                        <ScrollRest />
                        <ScrollArrow aria-label="Scroll down">
                            <svg width="10" height="6" viewBox="0 0 10 6" fill="#444">
                                <path d="M0 0H10L5 6Z" />
                            </svg>
                        </ScrollArrow>
                    </ScrollTrack>
                    <StatusBubble>javascript:void(0)</StatusBubble>
                </Viewport>
            </Frame>
        </Window>
    );
}
